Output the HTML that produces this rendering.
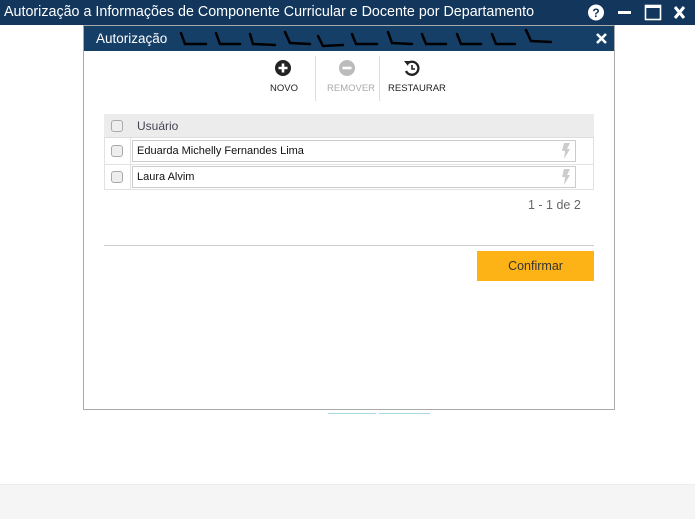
<!DOCTYPE html>
<html><head><meta charset="utf-8"><style>
*{margin:0;padding:0;box-sizing:border-box}
body{width:695px;height:519px;background:#fff;font-family:"Liberation Sans",sans-serif;position:relative;overflow:hidden}
.top{position:absolute;left:0;top:0;width:695px;height:25px;background:#12365c;color:#fff;font-size:14.3px;line-height:25px;padding-left:4px}
.dlg{position:absolute;left:83px;top:25px;width:532px;height:385px;border:1px solid #aaa;background:#fff}
.hd{height:25px;background:#163f68;color:#fff;font-size:13.5px;line-height:25px;padding-left:12px;position:relative}
.foot{position:absolute;left:0;top:484px;width:695px;height:35px;background:#f5f5f5;border-top:1px solid #eee}
.tb{position:absolute;top:30px;font-size:9.5px;color:#222;text-align:center}
.sep{position:absolute;top:30px;width:1px;height:45px;background:#ddd}
.cb{position:absolute;width:12px;height:12px;border:1px solid #aaa;border-radius:3px;background:#eee}
.inp{position:absolute;height:22px;border:1px solid #ccc;font-size:11px;line-height:20px;padding-left:4px;color:#111}
</style></head><body>
<div class="top">Autorização a Informações de Componente Curricular e Docente por Departamento
<svg style="position:absolute;left:586px;top:3px" width="105" height="19">
<circle cx="10" cy="9.5" r="8" fill="#fff"/><text x="10" y="14" font-size="12" font-weight="bold" fill="#12365c" text-anchor="middle" font-family="Liberation Sans">?</text>
<rect x="32" y="8" width="13" height="3" fill="#fff"/>
<rect x="59.5" y="2.5" width="15" height="14" fill="none" stroke="#fff" stroke-width="1.6"/><rect x="59" y="2" width="16" height="3" fill="#fff"/>
<path d="M89 4L98 15M98 4L89 15" stroke="#fff" stroke-width="3"/>
</svg></div>
<div class="dlg">
<div class="hd">Autorização
<svg style="position:absolute;left:94px;top:0" width="390" height="25"><g fill="none" stroke="#000" stroke-width="2.5" stroke-linecap="round">
<path d="M3 7L7 18L28 18"/><path d="M38 7L42 18L62 18"/><path d="M72 8L75 18L97 19"/><path d="M107 6L112 17L132 18"/><path d="M140 10L145 20L165 19"/><path d="M174 8L178 18L199 18"/><path d="M210 6L214 17L234 18"/><path d="M244 8L248 18L268 18"/><path d="M279 8L283 18L303 18"/><path d="M314 8L318 18L337 18"/><path d="M348 4L353 15L373 16"/></g></svg>
<svg style="position:absolute;left:512px;top:7px" width="11" height="11"><path d="M1 1L10 10M10 1L1 10" stroke="#fff" stroke-width="2.6"/></svg>
</div>
<svg style="position:absolute;left:191px;top:34px" width="16" height="16"><circle cx="8" cy="8" r="8" fill="#222"/><path d="M8 3.5V12.5M3.5 8H12.5" stroke="#fff" stroke-width="2.6"/></svg>
<div class="tb" style="left:186px;top:57px">NOVO</div>
<div class="sep" style="left:231px"></div>
<svg style="position:absolute;left:255px;top:34px" width="16" height="16"><circle cx="8" cy="8" r="8" fill="#bbb"/><path d="M3.5 8H12.5" stroke="#fff" stroke-width="2.6"/></svg>
<div class="tb" style="left:243px;top:57px;color:#aaa">REMOVER</div>
<div class="sep" style="left:295px"></div>
<svg style="position:absolute;left:319px;top:34px" width="18" height="17"><path d="M4 4A6.5 6.5 0 1 1 3 11" fill="none" stroke="#222" stroke-width="2.3"/><path d="M1 1L6 1L5 6Z" fill="#222"/><path d="M9 5V9H12" fill="none" stroke="#222" stroke-width="1.6"/></svg>
<div class="tb" style="left:304px;top:57px">RESTAURAR</div>
<div style="position:absolute;left:20px;top:88px;width:490px;height:24px;background:#ececec;border-bottom:1px solid #ddd"></div>
<div class="cb" style="left:27px;top:94px"></div>
<div style="position:absolute;left:53px;top:93px;font-size:12px;color:#445">Usuário</div>
<div style="position:absolute;left:20px;top:112px;width:490px;height:52px;border:1px solid #e2e2e2;border-top:none"></div>
<div style="position:absolute;left:20px;top:138px;width:490px;height:1px;background:#e2e2e2"></div>
<div style="position:absolute;left:46px;top:112px;width:1px;height:52px;background:#e2e2e2"></div>
<div class="cb" style="left:27px;top:119px"></div>
<div class="cb" style="left:27px;top:145px"></div>
<div class="inp" style="left:48px;top:114px;width:444px">Eduarda Michelly Fernandes Lima</div>
<div class="inp" style="left:48px;top:140px;width:444px">Laura Alvim</div>
<svg style="position:absolute;left:477px;top:117px" width="10" height="16"><path d="M3 0H9L6 6H9L3 16L4 8H1Z" fill="#ccc"/></svg>
<svg style="position:absolute;left:477px;top:143px" width="10" height="16"><path d="M3 0H9L6 6H9L3 16L4 8H1Z" fill="#ccc"/></svg>
<div style="position:absolute;left:444px;top:172px;font-size:12.5px;color:#666">1 - 1 de 2</div>
<div style="position:absolute;left:20px;top:219px;width:490px;height:1px;background:#ccc"></div>
<div style="position:absolute;left:393px;top:225px;width:117px;height:30px;background:#fdb315;color:#333;font-size:12.5px;line-height:30px;text-align:center">Confirmar</div>
</div>
<div style="position:absolute;left:328px;top:413px;width:48px;height:1px;background:#a8d8e6"></div>
<div style="position:absolute;left:379px;top:413px;width:51px;height:1px;background:#a8d8e6"></div>
<div class="foot"></div>
</body></html>
